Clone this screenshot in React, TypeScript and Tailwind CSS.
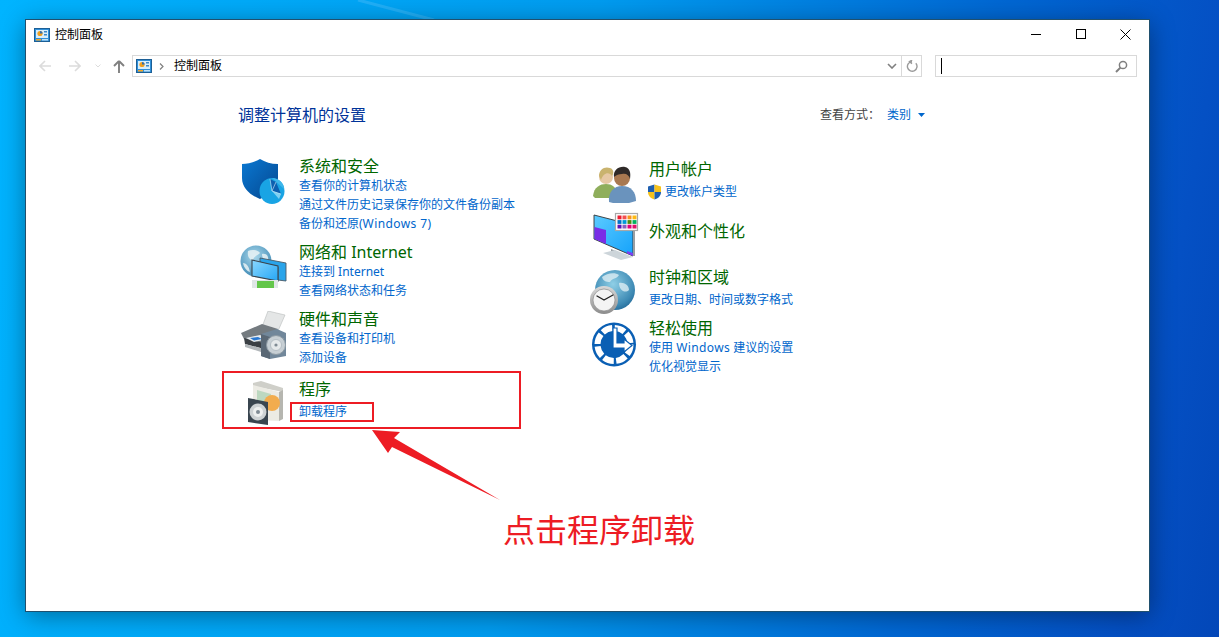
import React from 'react';

function PanelIcon() {
  return (
    <svg width="16" height="14" viewBox="0 0 16 14">
      <rect x="0.5" y="0.5" width="15" height="13" fill="#2f8fd8" stroke="#1c5f96" />
      <rect x="2" y="2" width="12" height="8" fill="#d8eefa" />
      <circle cx="6" cy="5.5" r="2.6" fill="#f0a020" />
      <path d="M6 5.5V2.9A2.6 2.6 0 0 1 8.6 5.5Z" fill="#2f6fb0" />
      <rect x="10" y="3" width="3" height="1.5" fill="#3a88c8" />
      <rect x="10" y="6" width="3" height="1.5" fill="#3a88c8" />
      <rect x="2" y="11" width="5" height="1.5" fill="#f5a623" />
      <rect x="8" y="11" width="6" height="1.5" fill="#bfe2f7" />
    </svg>
  );
}

function ShieldIcon() {
  return (
    <svg width="46" height="48" viewBox="0 0 46 48" className="ml-[2px] mt-[1px]">
      <defs>
        <linearGradient id="sh" x1="0" y1="0" x2="1" y2="1">
          <stop offset="0" stopColor="#0a78d2" />
          <stop offset="1" stopColor="#04478f" />
        </linearGradient>
      </defs>
      <path d="M20 1C15 4 8 6 2 6L2 20C2 30 10 37 20 41C29 37 38 30 38 20L38 6C31 6 25 4 20 1Z" fill="url(#sh)" />
      <ellipse cx="32" cy="33" rx="12.5" ry="13" fill="#19a4e4" />
      <path d="M32 20L44 31C44 25 39 20 32 20Z" fill="#3fb6ea" />
      <path d="M32 33L30 21L36 24L41 36Z" fill="#0c5fb0" />
      <path d="M32 33L41 36L39 41Z" fill="#7ed0f2" />
      <path d="M30 21L32 33L41 36M32 33L36 24" stroke="#d5eefa" strokeWidth="0.6" fill="none" />
    </svg>
  );
}

function NetworkIcon() {
  return (
    <svg width="48" height="48" viewBox="0 0 48 48" className="ml-[2px] mt-[2px]">
      <defs>
        <radialGradient id="gl" cx="0.45" cy="0.35" r="0.8">
          <stop offset="0" stopColor="#a9d7ea" />
          <stop offset="1" stopColor="#2f7fae" />
        </radialGradient>
        <linearGradient id="sc" x1="0" y1="0" x2="1" y2="1">
          <stop offset="0" stopColor="#8ad8ff" />
          <stop offset="1" stopColor="#25a6f5" />
        </linearGradient>
      </defs>
      <circle cx="16" cy="16" r="15.5" fill="url(#gl)" />
      <path d="M8 6C12 4 18 5 20 8C17 11 14 11 13 15C10 15 7 12 8 6ZM22 9C26 8 29 11 28 15C25 16 22 14 22 9ZM3 18C6 18 9 21 10 27C7 26 4 23 3 18Z" fill="#e8f2f5" opacity="0.85" />
      <path d="M20 13L46 18V36L38 35V22L20 17Z" fill="#2aa4ea" stroke="#4a5a66" strokeWidth="0.9" />
      <path d="M12 15L38 21V36L12 31Z" fill="url(#sc)" stroke="#39454f" strokeWidth="1.1" />
      <rect x="12" y="35" width="26" height="8" fill="#dfe6e6" />
      <rect x="17" y="36" width="17" height="7" fill="#63c64a" />
    </svg>
  );
}

function PrinterIcon() {
  return (
    <svg width="48" height="50" viewBox="0 0 48 50" className="ml-[2px] mt-[1px]">
      <path d="M28 0L45 4L38 20L22 16Z" fill="#e4e6e6" stroke="#b8bcbc" strokeWidth="0.6" />
      <path d="M1 22L22 13L38 18L24 32L4 28Z" fill="#747b80" />
      <path d="M4 27L24 32V38L5 33Z" fill="#3a3f44" />
      <path d="M6 27L20 24L28 28L14 31Z" fill="#e8edf0" />
      <path d="M10 27L18 26L22 28L14 29.5Z" fill="#2a78d0" />
      <path d="M5 33L24 38V42L5 36Z" fill="#b2b7ba" />
      <path d="M21 23L37 18L46 22V45L30 48L21 45Z" fill="#71879a" />
      <path d="M21 23L30 26V48L21 45Z" fill="#5a6875" />
      <circle cx="36" cy="34" r="9.5" fill="#c7cfd4" stroke="#8e9aa3" />
      <circle cx="36" cy="34" r="5.5" fill="#e5e9eb" stroke="#a8b2b9" strokeWidth="0.7" />
      <circle cx="36" cy="34" r="1.6" fill="#7f8b94" />
    </svg>
  );
}

function ProgramIcon() {
  return (
    <svg width="38" height="46" viewBox="0 0 38 46" className="ml-[9px] mt-[0px]">
      <path d="M6 3L14 1L36 8L36 12L6 6Z" fill="#cfcfc9" />
      <path d="M6 5L32 12V41L6 40Z" fill="#ecebe4" />
      <path d="M32 12L36 10V39L32 41Z" fill="#b6b6b0" />
      <path d="M10 10L24 14V30L10 30Z" fill="#bcd8c0" />
      <circle cx="25" cy="23" r="8" fill="#f2ac4e" />
      <path d="M1 18L21 22V45L1 42Z" fill="#39454f" />
      <circle cx="11" cy="32" r="8.5" fill="#cdd2d4" />
      <circle cx="11" cy="32" r="5" fill="#eef0f0" />
      <circle cx="11" cy="32" r="2" fill="#7f8b94" />
    </svg>
  );
}

function UsersIcon() {
  return (
    <svg width="46" height="38" viewBox="0 0 46 38" className="ml-[5px] mt-[6px]">
      <circle cx="13" cy="11" r="7" fill="#e6c8a4" />
      <path d="M6 10C6 3 12 0 17 2C21 3 21 8 19 10C16 5 10 7 8 14Z" fill="#c9b36e" />
      <path d="M0 30C1 21 7 18 13 18C19 18 24 21 25 30L20 32L2 32Z" fill="#8fae5c" />
      <circle cx="29" cy="12" r="8" fill="#a87850" />
      <path d="M21 11C20 4 26 0 32 1C37 2 38 7 37 13C36 9 33 7 29 8C26 8 23 9 21 11Z" fill="#2f2a28" />
      <path d="M16 36C15 26 21 20 29 20C38 20 43 26 43 35L36 37L20 37Z" fill="#6a93bd" />
    </svg>
  );
}

const palette = ['#ee1c30', '#f25050', '#f7941d', '#fdb913', '#0072c6', '#0099d8', '#4f8a10', '#00b160', '#5c12b8', '#8a60c0', '#e2007a', '#e0106a'];

function MonitorIcon() {
  return (
    <svg width="46" height="49" viewBox="0 0 46 49" className="ml-[5px] mt-[-10px]">
      <defs>
        <linearGradient id="mo" x1="0" y1="0" x2="1" y2="1">
          <stop offset="0" stopColor="#5ccbff" />
          <stop offset="1" stopColor="#14a2fb" />
        </linearGradient>
      </defs>
      <path d="M1 3L40 13V44L1 27Z" fill="url(#mo)" stroke="#333" strokeWidth="0.9" />
      <path d="M1.5 15L13 18V32L1.5 27Z" fill="#7a2ee6" />
      <path d="M34 39L40 41V44L34 41.5Z" fill="#7a3ef0" />
      <path d="M40 13L42 14V44L40 44Z" fill="#9a9ea2" />
      <path d="M18 37L30 42V45L18 40Z" fill="#8f979d" />
      <path d="M10 41L22 38L40 45L28 48Z" fill="#cdd5da" />
      <rect x="22.5" y="1.5" width="22" height="17" fill="#fff" stroke="#a8a8a8" strokeWidth="1.2" />
      {palette.map((c, i) => (
        <rect key={i} x={24.5 + (i % 4) * 5} y={3.5 + Math.floor(i / 4) * 4.6} width="4" height="3.8" fill={c} />
      ))}
    </svg>
  );
}

function ClockIcon() {
  return (
    <svg width="48" height="46" viewBox="0 0 48 46" className="ml-[2px] mt-[2px]">
      <defs>
        <radialGradient id="gb" cx="0.45" cy="0.35" r="0.75">
          <stop offset="0" stopColor="#8fcfe6" />
          <stop offset="0.7" stopColor="#3f8bb5" />
          <stop offset="1" stopColor="#1b5f8f" />
        </radialGradient>
        <linearGradient id="cl" x1="0" y1="0" x2="0" y2="1">
          <stop offset="0" stopColor="#d9d9d9" />
          <stop offset="1" stopColor="#8c8c8c" />
        </linearGradient>
      </defs>
      <circle cx="25" cy="20" r="20" fill="url(#gb)" />
      <path d="M12 7C17 3 25 2 29 5C27 9 22 8 20 12C16 12 13 11 12 7ZM29 13C34 12 39 15 39 20C35 24 29 20 29 13Z" fill="#dcecf2" opacity="0.8" />
      <circle cx="14" cy="30" r="14" fill="url(#cl)" />
      <circle cx="14" cy="30" r="11" fill="#f4f4f4" stroke="#8a8a8a" strokeWidth="0.7" />
      <path d="M14 30L7 26M14 30L23 25" stroke="#222" strokeWidth="1.4" strokeLinecap="round" />
    </svg>
  );
}

function AccessIcon() {
  return (
    <svg width="46" height="46" viewBox="0 0 46 46" className="ml-[3px] mt-[3px]">
      <circle cx="23" cy="22.5" r="22" fill="#0a5fb4" />
      <circle cx="23" cy="22.5" r="16.5" fill="none" stroke="#fff" strokeWidth="6" strokeDasharray="10.5 2.5" />
      <circle cx="23" cy="24" r="9.5" fill="#0a5fb4" />
      <path d="M22 6H26V21H33V17L41 23.5L33 30V26H22Z" fill="#fff" stroke="#0a5fb4" strokeWidth="1.2" />
    </svg>
  );
}

function Category({ icon, title, links, gap, extra }: { icon: React.ReactNode; title: string; links: React.ReactNode[]; gap?: string; extra?: string }) {
  return (
    <div className={`flex ${extra || ''}`}>
      <div className="w-[61px] h-0 shrink-0">{icon}</div>
      <div>
        <div className={`h-[19px] leading-[19px] text-[16px] text-[#006600] ${gap || ''}`}>{title}</div>
        {links.map((l, i) => (
          <div key={i} className="h-[19px] leading-[19px] text-[12px] text-[#0066cc] flex items-center whitespace-pre">
            {l}
          </div>
        ))}
      </div>
    </div>
  );
}

export default function App() {
  return (
    <div className="relative w-[1219px] h-[637px] overflow-hidden pl-[26px] pt-[20px] bg-[linear-gradient(100deg,#00b4ff_0%,#009cf0_45%,#0068d4_75%,#0450c4_92%,#0347b8_100%)] font-['Noto_Sans','Noto_Sans_CJK_SC',sans-serif]">
      {/* wallpaper light beam */}
      <svg width="90" height="22" viewBox="0 0 90 22" className="absolute left-[350px] top-0">
        <path d="M8 0L84 20" stroke="#7fd0ff" strokeWidth="3" opacity="0.25" />
      </svg>
      <div className="relative w-[1123px] h-[591px] bg-white shadow-[0_0_0_1px_#20506e,0_4px_24px_rgba(0,0,0,0.4)] flex flex-col">
        {/* title bar */}
        <div className="h-[28px] flex items-center pl-[8px] pr-[1px] shrink-0">
          <div className="flex items-center mt-[1px]">
            <PanelIcon />
            <span className="ml-[5px] text-[12px] text-black">控制面板</span>
          </div>
          <div className="ml-auto flex items-center">
            <div className="w-[45px] flex justify-center">
              <div className="w-[10px] h-px bg-black" />
            </div>
            <div className="w-[45px] flex justify-center">
              <div className="w-[10px] h-[10px] border border-black" />
            </div>
            <div className="w-[45px] flex justify-center">
              <svg width="11" height="11" viewBox="0 0 11 11">
                <path d="M0.5 0.5L10.5 10.5M10.5 0.5L0.5 10.5" stroke="#000" strokeWidth="1" />
              </svg>
            </div>
          </div>
        </div>

        {/* nav row */}
        <div className="h-[22px] mt-[7px] flex items-center shrink-0 pl-[13px] pr-[12px]">
          <svg width="12" height="12" viewBox="0 0 12 12" className="mr-[18px]">
            <path d="M6 1L1 6L6 11M1 6H12" stroke="#dcdcdc" strokeWidth="1.6" fill="none" />
          </svg>
          <svg width="12" height="12" viewBox="0 0 12 12" className="mr-[14px]">
            <path d="M6 1L11 6L6 11M11 6H0" stroke="#dcdcdc" strokeWidth="1.6" fill="none" />
          </svg>
          <svg width="6" height="4" viewBox="0 0 6 4" className="mr-[12px]">
            <path d="M0.5 0.5L3 3L5.5 0.5" stroke="#dcdcdc" strokeWidth="1" fill="none" />
          </svg>
          <svg width="12" height="13" viewBox="0 0 12 13" className="mr-[7px]">
            <path d="M6 1L1 6M6 1L11 6M6 1V13" stroke="#808080" strokeWidth="1.9" fill="none" />
          </svg>
          <div className="w-[790px] h-[22px] border border-[#d9d9d9] flex items-center pl-[3px] shrink-0">
            <PanelIcon />
            <svg width="5" height="7" viewBox="0 0 5 7" className="ml-[7px]">
              <path d="M1 0.5L4 3.5L1 6.5" stroke="#808080" strokeWidth="1.2" fill="none" />
            </svg>
            <span className="ml-[10px] text-[12px] text-black">控制面板</span>
            <svg width="10" height="6" viewBox="0 0 10 6" className="ml-auto mr-[4px]">
              <path d="M1 1L5 5L9 1" stroke="#808080" strokeWidth="1.6" fill="none" />
            </svg>
            <div className="w-px h-full bg-[#d9d9d9]" />
            <svg width="12" height="12" viewBox="0 0 12 12" className="mx-[3.5px]">
              <path d="M9.8 3.2A4.8 4.8 0 1 1 6 1.6H3.5M6.2 0L3.5 1.6L6 3.6" stroke="#9a9a9a" strokeWidth="1.4" fill="none" />
            </svg>
          </div>
          <div className="ml-auto w-[202px] h-[22px] border border-[#d9d9d9] flex items-center pl-[5px] pr-[8px]">
            <div className="w-px h-[16px] bg-black" />
            <svg width="13" height="13" viewBox="0 0 13 13" className="ml-auto">
              <circle cx="8" cy="5" r="3.6" stroke="#808080" strokeWidth="1.5" fill="none" />
              <path d="M5.4 7.6L1 12" stroke="#808080" strokeWidth="2" />
            </svg>
          </div>
        </div>

        {/* content */}
        <div className="pl-[212px] w-[899px]">
          <div className="flex items-center h-[20px] mt-[28px]">
            <span className="text-[16px] text-[#003399]">调整计算机的设置</span>
            <span className="ml-auto text-[12px] text-[#444444]">查看方式：</span>
            <span className="ml-[7px] text-[12px] text-[#0066cc]">类别</span>
            <svg width="7" height="4" viewBox="0 0 7 4" className="ml-[7px]">
              <path d="M0 0H7L3.5 4Z" fill="#0066cc" />
            </svg>
          </div>

          <div className="flex mt-[32px]">
            <div className="w-[350px] shrink-0">
              <Category
                icon={<ShieldIcon />}
                title="系统和安全"
                links={[
                  '查看你的计算机状态',
                  '通过文件历史记录保存你的文件备份副本',
                  <span key="w">备份和还原(<span className="tracking-[0.4px]">Windows 7</span>)</span>,
                ]}
              />
              <Category
                extra="mt-[10px]"
                icon={<NetworkIcon />}
                title="网络和 Internet"
                links={['连接到 Internet', '查看网络状态和任务']}
              />
              <Category
                extra="mt-[10px]"
                icon={<PrinterIcon />}
                title="硬件和声音"
                links={['查看设备和打印机', '添加设备']}
              />
              <Category extra="mt-[13px]" gap="mb-[3px]" icon={<ProgramIcon />} title="程序" links={['卸载程序']} />
            </div>
            <div className="pt-[3px]">
              <Category
                gap="mb-[3px]"
                icon={<UsersIcon />}
                title="用户帐户"
                links={[
                  <span key="u" className="flex items-center ml-[-2px]">
                    <svg width="15" height="16" viewBox="0 0 15 16" className="mr-[3px]">
                      <path d="M7.5 0.5L1 2.5V8H7.5Z" fill="#1f5fb0" />
                      <path d="M7.5 0.5L14 2.5V8H7.5Z" fill="#f6c21c" />
                      <path d="M1 8H7.5V15.5C4 14.5 1 12 1 8Z" fill="#f6c21c" />
                      <path d="M14 8H7.5V15.5C11 14.5 14 12 14 8Z" fill="#1f5fb0" />
                    </svg>
                    更改帐户类型
                  </span>,
                ]}
              />
              <Category extra="mt-[21px]" icon={<MonitorIcon />} title="外观和个性化" links={[]} />
              <Category
                extra="mt-[27px]"
                gap="mb-[3px]"
                icon={<ClockIcon />}
                title="时钟和区域"
                links={['更改日期、时间或数字格式']}
              />
              <Category
                extra="mt-[10px]"
                icon={<AccessIcon />}
                title="轻松使用"
                links={[
                  <span key="a">使用 <span className="tracking-[0.4px]">Windows</span> 建议的设置</span>,
                  '优化视觉显示',
                ]}
              />
            </div>
          </div>
        </div>

        {/* annotations on top of the window */}
        <div className="absolute left-[196px] top-[351px] w-[299px] h-[58px] border-2 border-[#ed1c24]" />
        <div className="absolute left-[264px] top-[382px] w-[84px] h-[20px] border-2 border-[#ed1c24]" />
        <svg width="140" height="80" viewBox="0 0 140 80" className="absolute left-[345px] top-[409px]">
          <path d="M1 1L29 3L23 9L129 71L21 18L17 24Z" fill="#ed1c24" />
        </svg>
        <div className="absolute left-[477px] top-[490px] text-[32px] leading-[40px] text-[#ed1c24] whitespace-nowrap">点击程序卸载</div>
      </div>
    </div>
  );
}
